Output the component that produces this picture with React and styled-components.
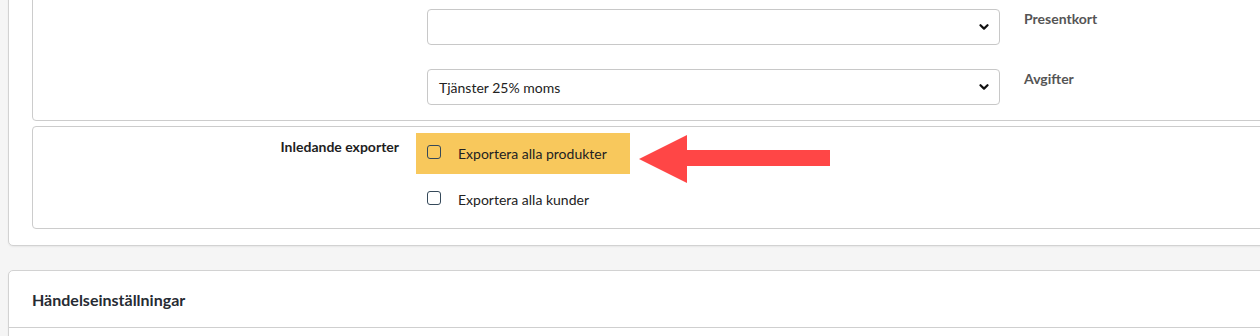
import React from 'react';
import styled, { createGlobalStyle } from 'styled-components';

const GlobalStyle = createGlobalStyle`
  html, body {
    margin: 0;
    padding: 0;
    overflow: hidden;
    background: #f5f5f5;
    font-family: Lato, 'Open Sans', Arial, sans-serif;
  }
`;

const Page = styled.div`
  padding-left: 8px;
  width: 1320px;
`;

const Card = styled.div`
  background: #ffffff;
  border: 1px solid #d2d2d2;
  border-radius: 5px;
  box-shadow: 0 1px 2px rgba(0, 0, 0, 0.06);
  margin-top: ${({ offset }) => offset}px;
`;

const CardBody = styled.div`
  padding: 10px 0 16px 23px;
`;

const Box = styled.div`
  position: relative;
  border: 1px solid #cccccc;
  border-radius: 4px;
  & + & {
    margin-top: 5px;
  }
`;

const SelectRows = styled.div`
  display: grid;
  grid-template-columns: 394px 573px 1fr;
  row-gap: 24px;
  padding: 27px 0 15px;
`;

const SelectBox = styled.div`
  grid-column: 2;
  box-sizing: border-box;
  height: 36px;
  border: 1px solid #c8c8c8;
  border-radius: 4px;
  background: #fff;
  display: flex;
  align-items: center;
  justify-content: space-between;
  padding: 0 10px 0 11px;
  font-size: 14px;
  color: #222;
`;

const FieldLabel = styled.div`
  align-self: start;
  padding-left: 24px;
  line-height: 20px;
  font-size: 14px;
  font-weight: 700;
  color: #555;
`;

const ExportRow = styled.div`
  display: grid;
  grid-template-columns: 383px 1fr;
  padding: 6px 0 8px;
`;

const RowLabel = styled.div`
  text-align: right;
  padding: 4px 17px 0 0;
  line-height: 20px;
  font-size: 14px;
  font-weight: 700;
  color: #1e1e1e;
`;

const Options = styled.div`
  display: flex;
  flex-direction: column;
  align-items: flex-start;
  gap: 5px;
`;

const Option = styled.label`
  display: flex;
  align-items: center;
  height: 41px;
  padding: 0 23px 0 11px;
  background: ${({ highlight }) => (highlight ? '#f8c85c' : 'transparent')};
  font-size: 14px;
  color: #222;
`;

const Check = styled.span`
  box-sizing: border-box;
  width: 14px;
  height: 14px;
  border: 1px solid #35495a;
  border-radius: 3px;
  margin: 0 17px 4px 0;
`;

const Arrow = styled.svg`
  position: absolute;
  left: 603px;
  top: 5px;
`;

const CardHeader = styled.div`
  height: 56px;
  display: flex;
  align-items: center;
  padding-left: 23px;
  border-bottom: 1px solid #cfcfcf;
  font-size: 16px;
  font-weight: 700;
  color: #262b33;
`;

const Chevron = () => (
  <svg width="10" height="8" viewBox="0 0 10 8">
    <path d="M1.5 2.2 L5 5.6 L8.5 2.2" fill="none" stroke="#111" strokeWidth="2.2" strokeLinecap="round" strokeLinejoin="round" />
  </svg>
);

const selects = [
  { value: '', label: 'Presentkort' },
  { value: 'Tjänster 25% moms', label: 'Avgifter' },
];

const App = () => (
  <>
    <GlobalStyle />
    <Page>
      <Card offset={-30}>
        <CardBody>
          <Box>
            <SelectRows>
              {selects.map(s => (
                <React.Fragment key={s.label}>
                  <SelectBox>
                    <span>{s.value}</span>
                    <Chevron />
                  </SelectBox>
                  <FieldLabel>{s.label}</FieldLabel>
                </React.Fragment>
              ))}
            </SelectRows>
          </Box>
          <Box>
            <ExportRow>
              <RowLabel>Inledande exporter</RowLabel>
              <Options>
                <Option highlight>
                  <Check />
                  Exportera alla produkter
                </Option>
                <Option>
                  <Check />
                  Exportera alla kunder
                </Option>
              </Options>
            </ExportRow>
            <Arrow width="200" height="56" viewBox="0 0 200 56">
              <polygon points="3,27 51,3 51,18 194,18 194,34 51,34 51,51" fill="#ff4646" />
            </Arrow>
          </Box>
        </CardBody>
      </Card>
      <Card offset={24}>
        <CardHeader>Händelseinställningar</CardHeader>
        <div style={{ height: 40 }} />
      </Card>
    </Page>
  </>
);

export default App;
